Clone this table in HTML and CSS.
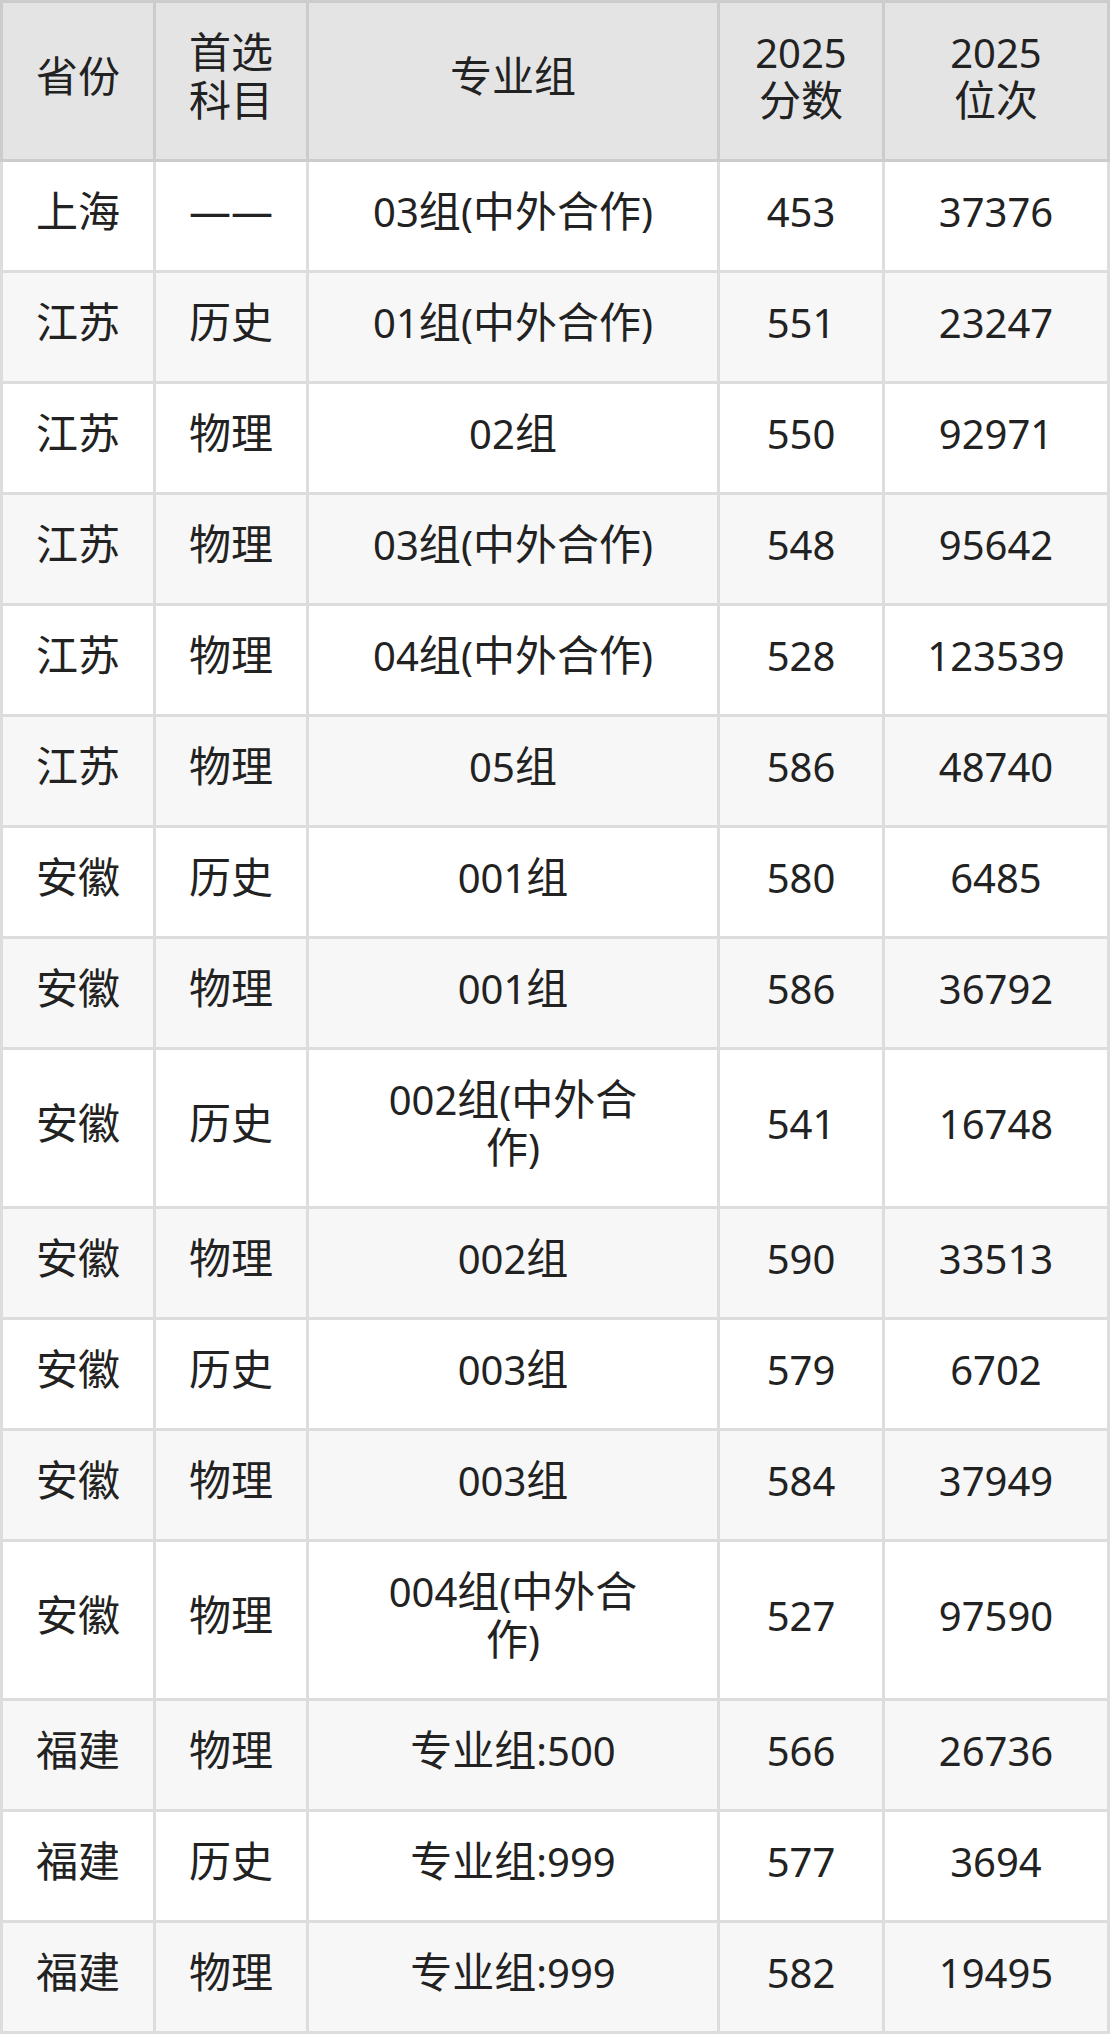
FILE: index.html
```html
<!DOCTYPE html>
<html lang="zh-CN">
<head>
<meta charset="utf-8">
<title>2025 专业组分数位次</title>
<link rel="stylesheet" href="styles.css">
</head>
<body>
<table class="score-table">
  <colgroup>
    <col class="c-prov">
    <col class="c-subj">
    <col class="c-group">
    <col class="c-score">
    <col class="c-rank">
  </colgroup>
  <thead>
    <tr>
      <th><span class="han">省份</span></th>
      <th><span class="han">首选<br>科目</span></th>
      <th><span class="han">专业组</span></th>
      <th>2025<br><span class="han">分数</span></th>
      <th>2025<br><span class="han">位次</span></th>
    </tr>
  </thead>
  <tbody>
    <tr><td><span class="han">上海</span></td><td><span class="han">——</span></td><td class="grp">03<span class="han">组</span>(<span class="han">中外合作</span>)</td><td>453</td><td>37376</td></tr>
    <tr><td><span class="han">江苏</span></td><td><span class="han">历史</span></td><td class="grp">01<span class="han">组</span>(<span class="han">中外合作</span>)</td><td>551</td><td>23247</td></tr>
    <tr><td><span class="han">江苏</span></td><td><span class="han">物理</span></td><td class="grp">02<span class="han">组</span></td><td>550</td><td>92971</td></tr>
    <tr><td><span class="han">江苏</span></td><td><span class="han">物理</span></td><td class="grp">03<span class="han">组</span>(<span class="han">中外合作</span>)</td><td>548</td><td>95642</td></tr>
    <tr><td><span class="han">江苏</span></td><td><span class="han">物理</span></td><td class="grp">04<span class="han">组</span>(<span class="han">中外合作</span>)</td><td>528</td><td>123539</td></tr>
    <tr><td><span class="han">江苏</span></td><td><span class="han">物理</span></td><td class="grp">05<span class="han">组</span></td><td>586</td><td>48740</td></tr>
    <tr><td><span class="han">安徽</span></td><td><span class="han">历史</span></td><td class="grp">001<span class="han">组</span></td><td>580</td><td>6485</td></tr>
    <tr><td><span class="han">安徽</span></td><td><span class="han">物理</span></td><td class="grp">001<span class="han">组</span></td><td>586</td><td>36792</td></tr>
    <tr><td><span class="han">安徽</span></td><td><span class="han">历史</span></td><td class="grp">002<span class="han">组</span>(<span class="han">中外合作</span>)</td><td>541</td><td>16748</td></tr>
    <tr><td><span class="han">安徽</span></td><td><span class="han">物理</span></td><td class="grp">002<span class="han">组</span></td><td>590</td><td>33513</td></tr>
    <tr><td><span class="han">安徽</span></td><td><span class="han">历史</span></td><td class="grp">003<span class="han">组</span></td><td>579</td><td>6702</td></tr>
    <tr><td><span class="han">安徽</span></td><td><span class="han">物理</span></td><td class="grp">003<span class="han">组</span></td><td>584</td><td>37949</td></tr>
    <tr><td><span class="han">安徽</span></td><td><span class="han">物理</span></td><td class="grp">004<span class="han">组</span>(<span class="han">中外合作</span>)</td><td>527</td><td>97590</td></tr>
    <tr><td><span class="han">福建</span></td><td><span class="han">物理</span></td><td class="grp"><span class="han">专业组</span>:500</td><td>566</td><td>26736</td></tr>
    <tr><td><span class="han">福建</span></td><td><span class="han">历史</span></td><td class="grp"><span class="han">专业组</span>:999</td><td>577</td><td>3694</td></tr>
    <tr><td><span class="han">福建</span></td><td><span class="han">物理</span></td><td class="grp"><span class="han">专业组</span>:999</td><td>582</td><td>19495</td></tr>
  </tbody>
</table>
</body>
</html>
```

FILE: styles.css
```css
html, body {
  margin: 0;
  padding: 0;
  background: #ffffff;
}

body {
  font-family: "Noto Sans", "Noto Sans CJK SC", sans-serif;
  font-size: 40px;
  line-height: 48px;
  color: #222222;
}

.han {
  font-size: 42px;
  line-height: 24px;
}

.score-table {
  width: 1110px;
  border-collapse: collapse;
  table-layout: fixed;
}

.c-prov { width: 153px; }
.c-subj { width: 153px; }
.c-group { width: 411px; }
.c-score { width: 165px; }
.c-rank { width: 225px; }

.score-table th,
.score-table td {
  padding: 26px 4px 34px;
  text-align: center;
  vertical-align: middle;
}

.score-table th {
  font-weight: normal;
  background: #e4e4e4;
  border: 3px solid #cccccc;
}

.score-table td {
  border: 3px solid #dddddd;
}

.score-table td.grp {
  padding-left: 60px;
  padding-right: 60px;
}

.score-table tbody tr:nth-child(odd) td {
  background: #ffffff;
}

.score-table tbody tr:nth-child(even) td {
  background: #f7f7f7;
}
```
